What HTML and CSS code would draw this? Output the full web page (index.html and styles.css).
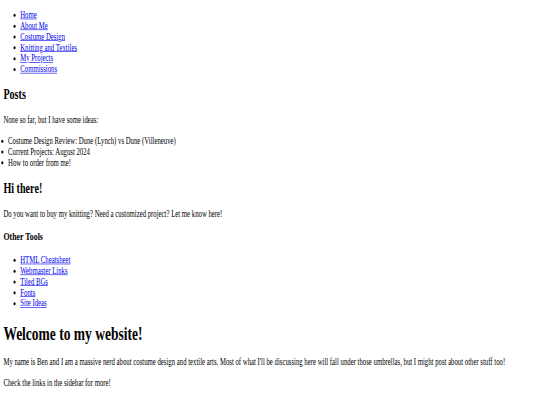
FILE: index.html
```html
<!DOCTYPE html>
<html>
<head>
<meta charset="utf-8">
<title>Ben's Website</title>
<link rel="stylesheet" href="styles.css">
</head>
<body>
<div class="frame">
<div class="page">
  <ul class="nav">
    <li><a href="#">Home</a></li>
    <li><a href="#">About Me</a></li>
    <li><a href="#">Costume Design</a></li>
    <li><a href="#">Knitting and Textiles</a></li>
    <li><a href="#">My Projects</a></li>
    <li><a href="#">Commissions</a></li>
  </ul>
  <h2>Posts</h2>
  <p>None so far, but I have some ideas:</p>
  <ul class="posts">
    <li>Costume Design Review: Dune (Lynch) vs Dune (Villeneuve)</li>
    <li>Current Projects: August 2024</li>
    <li>How to order from me!</li>
  </ul>
  <h2>Hi there!</h2>
  <p>Do you want to buy my knitting? Need a customized project? Let me know here!</p>
  <h3>Other Tools</h3>
  <ul class="tools">
    <li><a href="#">HTML Cheatsheet</a></li>
    <li><a href="#">Webmaster Links</a></li>
    <li><a href="#">Tiled BGs</a></li>
    <li><a href="#">Fonts</a></li>
    <li><a href="#">Site Ideas</a></li>
  </ul>
  <h1>Welcome to my website!</h1>
  <p>My name is Ben and I am a massive nerd about costume design and textile arts. Most of what I'll be discussing here will fall under those umbrellas, but I might post about other stuff too!</p>
  <p class="last">Check the links in the sidebar for more!</p>
</div>
</div>
</body>
</html>
```
FILE: styles.css
```css
html, body {
  margin: 0;
  padding: 0;
  overflow: hidden;
  background: #ffffff;
}
.frame {
  width: 540px;
  height: 405px;
  overflow: hidden;
}
.page {
  width: 1254px;
  padding: 8px 8px 0;
  font-family: "Liberation Serif", "Times New Roman", serif;
  font-size: 16px;
  color: #000000;
  transform: scale(0.421875, 0.602);
  transform-origin: 0 0;
}
.page a {
  color: #0000ee;
  text-decoration: underline;
}
.nav {
  margin: 8px 0 16px;
  padding-left: 40px;
}
.posts {
  padding-left: 11px;
}
.tools {
  padding-left: 40px;
}
.last {
  margin-bottom: 0;
}
h1 {
  font-size: 32px;
  margin: 21.44px 0;
}
h2 {
  font-size: 24px;
  margin: 19.92px 0;
}
h3 {
  font-size: 18.72px;
  margin: 18.72px 0;
}
```
